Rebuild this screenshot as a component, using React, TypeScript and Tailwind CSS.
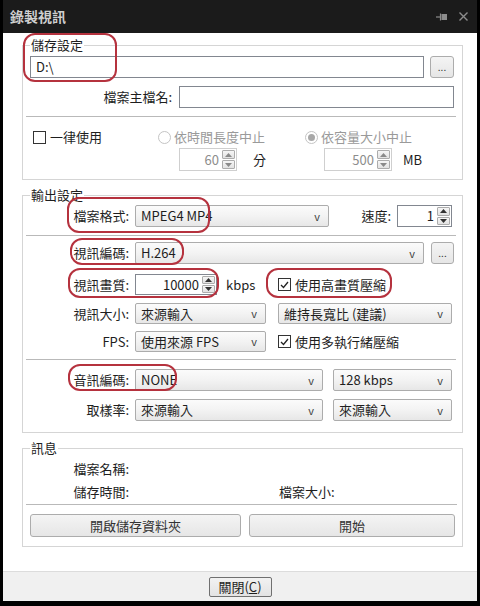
import type { ReactNode } from "react";

const font = "font-['Noto_Sans_CJK_TC','Noto_Sans',sans-serif]";

function Group({
  title,
  className,
  children,
}: {
  title: string;
  className: string;
  children: ReactNode;
}) {
  return (
    <div className={`relative border border-[#d5d5d5] ${className}`}>
      <span className="absolute -top-[9px] left-[7px] bg-white px-[1px] leading-[16px]">
        {title}
      </span>
      {children}
    </div>
  );
}

function Sep({ className = "" }: { className?: string }) {
  return <div className={`-ml-[4px] -mr-[2px] h-px bg-[#b9b9b9] ${className}`} />;
}

function Label({ text, className = "w-[99px]" }: { text: string; className?: string }) {
  return <span className={`shrink-0 text-right leading-[16px] ${className}`}>{text}</span>;
}

function Select({ value, className }: { value: string; className: string }) {
  return (
    <div
      className={`flex shrink-0 items-center justify-between rounded-[2px] border border-[#acacac] bg-linear-to-b from-[#fbfbfb] via-[#f3f3f3] to-[#e7e7e7] pl-[5px] pr-[8px] ${className}`}
    >
      <span className="leading-[16px]">{value}</span>
      <span className="text-[11px] leading-none text-[#404040]">v</span>
    </div>
  );
}

function Field({ value = "", className }: { value?: string; className: string }) {
  return (
    <div className={`flex items-center border border-[#828790] bg-white px-[5px] ${className}`}>
      <span className="leading-[16px]">{value}</span>
    </div>
  );
}

function Btn({ children, className }: { children: ReactNode; className: string }) {
  return (
    <div
      className={`flex shrink-0 items-center justify-center rounded-[3px] border border-[#acacac] bg-linear-to-b from-[#f4f4f4] to-[#e6e6e6] text-[#333] ${className}`}
    >
      {children}
    </div>
  );
}

function Arrow({ up, dim }: { up?: boolean; dim?: boolean }) {
  return (
    <div className="flex flex-1 items-center justify-center rounded-[1px] border border-[#acacac] bg-linear-to-b from-[#f6f6f6] to-[#e2e2e2]">
      <svg width="7" height="4" viewBox="0 0 7 4">
        <path
          d={up ? "M0 4 L3.5 0 L7 4 Z" : "M0 0 L3.5 4 L7 0 Z"}
          fill={dim ? "#8a8a8a" : "#333"}
        />
      </svg>
    </div>
  );
}

function Spin({
  value,
  className,
  dim,
}: {
  value: string;
  className: string;
  dim?: boolean;
}) {
  return (
    <div
      className={`flex shrink-0 items-stretch border bg-white p-[1px] ${
        dim ? "border-[#cfcfcf] text-[#8d8d8d]" : "border-[#828790]"
      } ${className}`}
    >
      <span className="flex flex-1 items-center justify-end pr-[3px] leading-[16px]">
        {value}
      </span>
      <div className="flex w-[13px] flex-col gap-[1px]">
        <Arrow up dim={dim} />
        <Arrow dim={dim} />
      </div>
    </div>
  );
}

function Check({ text, checked }: { text: string; checked?: boolean }) {
  return (
    <div className="flex items-center">
      <div className="flex h-[13px] w-[13px] items-center justify-center border border-[#333] bg-white">
        {checked && (
          <svg width="9" height="8" viewBox="0 0 9 8">
            <path d="M1 4 L3.5 6.5 L8 1" stroke="#222" strokeWidth="1.3" fill="none" />
          </svg>
        )}
      </div>
      <span className="ml-[4px] leading-[16px]">{text}</span>
    </div>
  );
}

function Radio({ text, on }: { text: string; on?: boolean }) {
  return (
    <div className="flex items-center text-[#9a9a9a]">
      <div className="flex h-[13px] w-[13px] items-center justify-center rounded-full border border-[#c4c4c4] bg-white">
        {on && <div className="h-[7px] w-[7px] rounded-full bg-[#a8a8a8]" />}
      </div>
      <span className="ml-[3px] leading-[16px]">{text}</span>
    </div>
  );
}

function Mark({ className }: { className: string }) {
  return (
    <div
      className={`pointer-events-none absolute rounded-[12px] border-2 border-[#b5323e] ${className}`}
    />
  );
}

export default function App() {
  return (
    <div
      className={`relative h-[606px] w-[480px] bg-black px-[3px] pb-[5px] text-[13px] text-[#1e1e1e] ${font}`}
    >
      <div className="flex h-full flex-col">
        <div className="flex h-[33px] shrink-0 items-center justify-between bg-[#1b1b1b] pl-[7px] pr-[9px]">
          <span className="text-[14px] font-bold text-[#cfcfcf]">錄製視訊</span>
          <div className="flex items-center gap-[12px]">
            <svg width="11" height="8" viewBox="0 0 11 8">
              <path d="M0 4 H5" stroke="#8c8c8c" strokeWidth="1.2" />
              <path d="M4.5 0.5 V7.5" stroke="#8c8c8c" strokeWidth="1.2" />
              <rect x="5.5" y="1" width="5.5" height="6" fill="#8c8c8c" />
            </svg>
            <svg width="9" height="9" viewBox="0 0 9 9">
              <path d="M0.5 0.5 L8.5 8.5 M8.5 0.5 L0.5 8.5" stroke="#8c8c8c" strokeWidth="1.4" />
            </svg>
          </div>
        </div>

        <div className="flex flex-1 flex-col bg-white pl-[19px] pr-[14px] pt-[12px]">
          <Group title="儲存設定" className="h-[135px] shrink-0 pl-[7px] pr-[8px] pt-[10px]">
            <div className="flex h-[22px] gap-[6px]">
              <Field value="D:\" className="flex-1" />
              <Btn className="w-[24px]">
                <span className="text-[10px] leading-none">...</span>
              </Btn>
            </div>
            <div className="mt-[8px] flex h-[22px] items-center gap-[7px]">
              <Label text="檔案主檔名:" className="w-[142px]" />
              <Field className="h-full flex-1" />
            </div>
            <Sep className="mt-[8px]" />
            <div className="mt-[12px] flex h-[16px] items-center">
              <div className="w-[128px] shrink-0 pl-[3px]">
                <Check text="一律使用" />
              </div>
              <div className="w-[147px] shrink-0">
                <Radio text="依時間長度中止" />
              </div>
              <Radio text="依容量大小中止" on />
            </div>
            <div className="mt-[3px] flex h-[23px] items-stretch">
              <div className="w-[149px] shrink-0" />
              <Spin value="60" dim className="w-[58px]" />
              <span className="flex w-[87px] shrink-0 items-center pl-[16px]">分</span>
              <Spin value="500" dim className="w-[68px]" />
              <span className="ml-[11px] flex items-center">MB</span>
            </div>
          </Group>

          <Group title="輸出設定" className="mt-[15px] h-[238px] shrink-0 pl-[7px] pr-[8px] pt-[9px]">
            <div className="flex h-[22px] items-center">
              <Label text="檔案格式:" />
              <Select value="MPEG4 MP4" className="ml-[6px] h-full w-[194px]" />
              <Label text="速度:" className="w-[62px]" />
              <Spin value="1" className="ml-[6px] h-full w-[55px]" />
            </div>
            <Sep className="mt-[8px]" />
            <div className="mt-[6px] flex h-[22px] items-center">
              <Label text="視訊編碼:" />
              <Select value="H.264" className="ml-[6px] h-full flex-1 shrink" />
              <Btn className="ml-[7px] h-full w-[23px]">
                <span className="text-[10px] leading-none">...</span>
              </Btn>
            </div>
            <div className="mt-[10px] flex h-[21px] items-center">
              <Label text="視訊畫質:" />
              <Spin value="10000" className="ml-[6px] h-full w-[82px]" />
              <span className="w-[61px] shrink-0 pl-[9px] leading-[16px]">kbps</span>
              <Check text="使用高畫質壓縮" checked />
            </div>
            <div className="mt-[8px] flex h-[21px] items-center">
              <Label text="視訊大小:" />
              <Select value="來源輸入" className="ml-[6px] h-full w-[131px]" />
              <Select value="維持長寬比 (建議)" className="ml-[12px] h-full w-[174px]" />
            </div>
            <div className="mt-[7px] flex h-[21px] items-center">
              <Label text="FPS:" />
              <Select value="使用來源 FPS" className="ml-[6px] h-full w-[131px]" />
              <div className="ml-[12px]">
                <Check text="使用多執行緒壓縮" checked />
              </div>
            </div>
            <Sep className="mt-[7px]" />
            <div className="mt-[9px] flex h-[22px] items-center">
              <Label text="音訊編碼:" />
              <Select value="NONE" className="ml-[6px] h-full w-[188px]" />
              <Select value="128 kbps" className="ml-[10px] h-full w-[119px]" />
            </div>
            <div className="mt-[8px] flex h-[22px] items-center">
              <Label text="取樣率:" />
              <Select value="來源輸入" className="ml-[6px] h-full w-[188px]" />
              <Select value="來源輸入" className="ml-[10px] h-full w-[119px]" />
            </div>
          </Group>

          <Group title="訊息" className="mt-[15px] h-[99px] shrink-0 pl-[7px] pr-[7px] pt-[12px]">
            <div className="flex h-[16px] items-center">
              <Label text="檔案名稱:" />
            </div>
            <div className="mt-[7px] flex h-[16px] items-center">
              <Label text="儲存時間:" />
              <div className="w-[150px] shrink-0" />
              <span className="leading-[16px]">檔案大小:</span>
            </div>
            <Sep className="mt-[4px]" />
            <div className="mt-[9px] flex h-[23px] gap-[8px]">
              <Btn className="w-[211px]">開啟儲存資料夾</Btn>
              <Btn className="flex-1">開始</Btn>
            </div>
          </Group>
        </div>

        <div className="flex h-[30px] shrink-0 items-center justify-center border-t border-[#dcdcdc] bg-[#f0f0f0]">
          <div className="flex h-[20px] w-[63px] items-center justify-center rounded-[2px] border border-[#707070] bg-linear-to-b from-[#f2f2f2] to-[#e3e3e3]">
            <span className="leading-[16px]">
              關閉(<span className="underline">C</span>)
            </span>
          </div>
        </div>
      </div>

      <Mark className="left-[23px] top-[33px] h-[49px] w-[94px]" />
      <Mark className="left-[67px] top-[197px] h-[36px] w-[143px]" />
      <Mark className="left-[70px] top-[238px] h-[27px] w-[114px]" />
      <Mark className="left-[68px] top-[268px] h-[30px] w-[151px]" />
      <Mark className="left-[266px] top-[268px] h-[30px] w-[126px]" />
      <Mark className="left-[68px] top-[364px] h-[27px] w-[109px]" />
    </div>
  );
}
